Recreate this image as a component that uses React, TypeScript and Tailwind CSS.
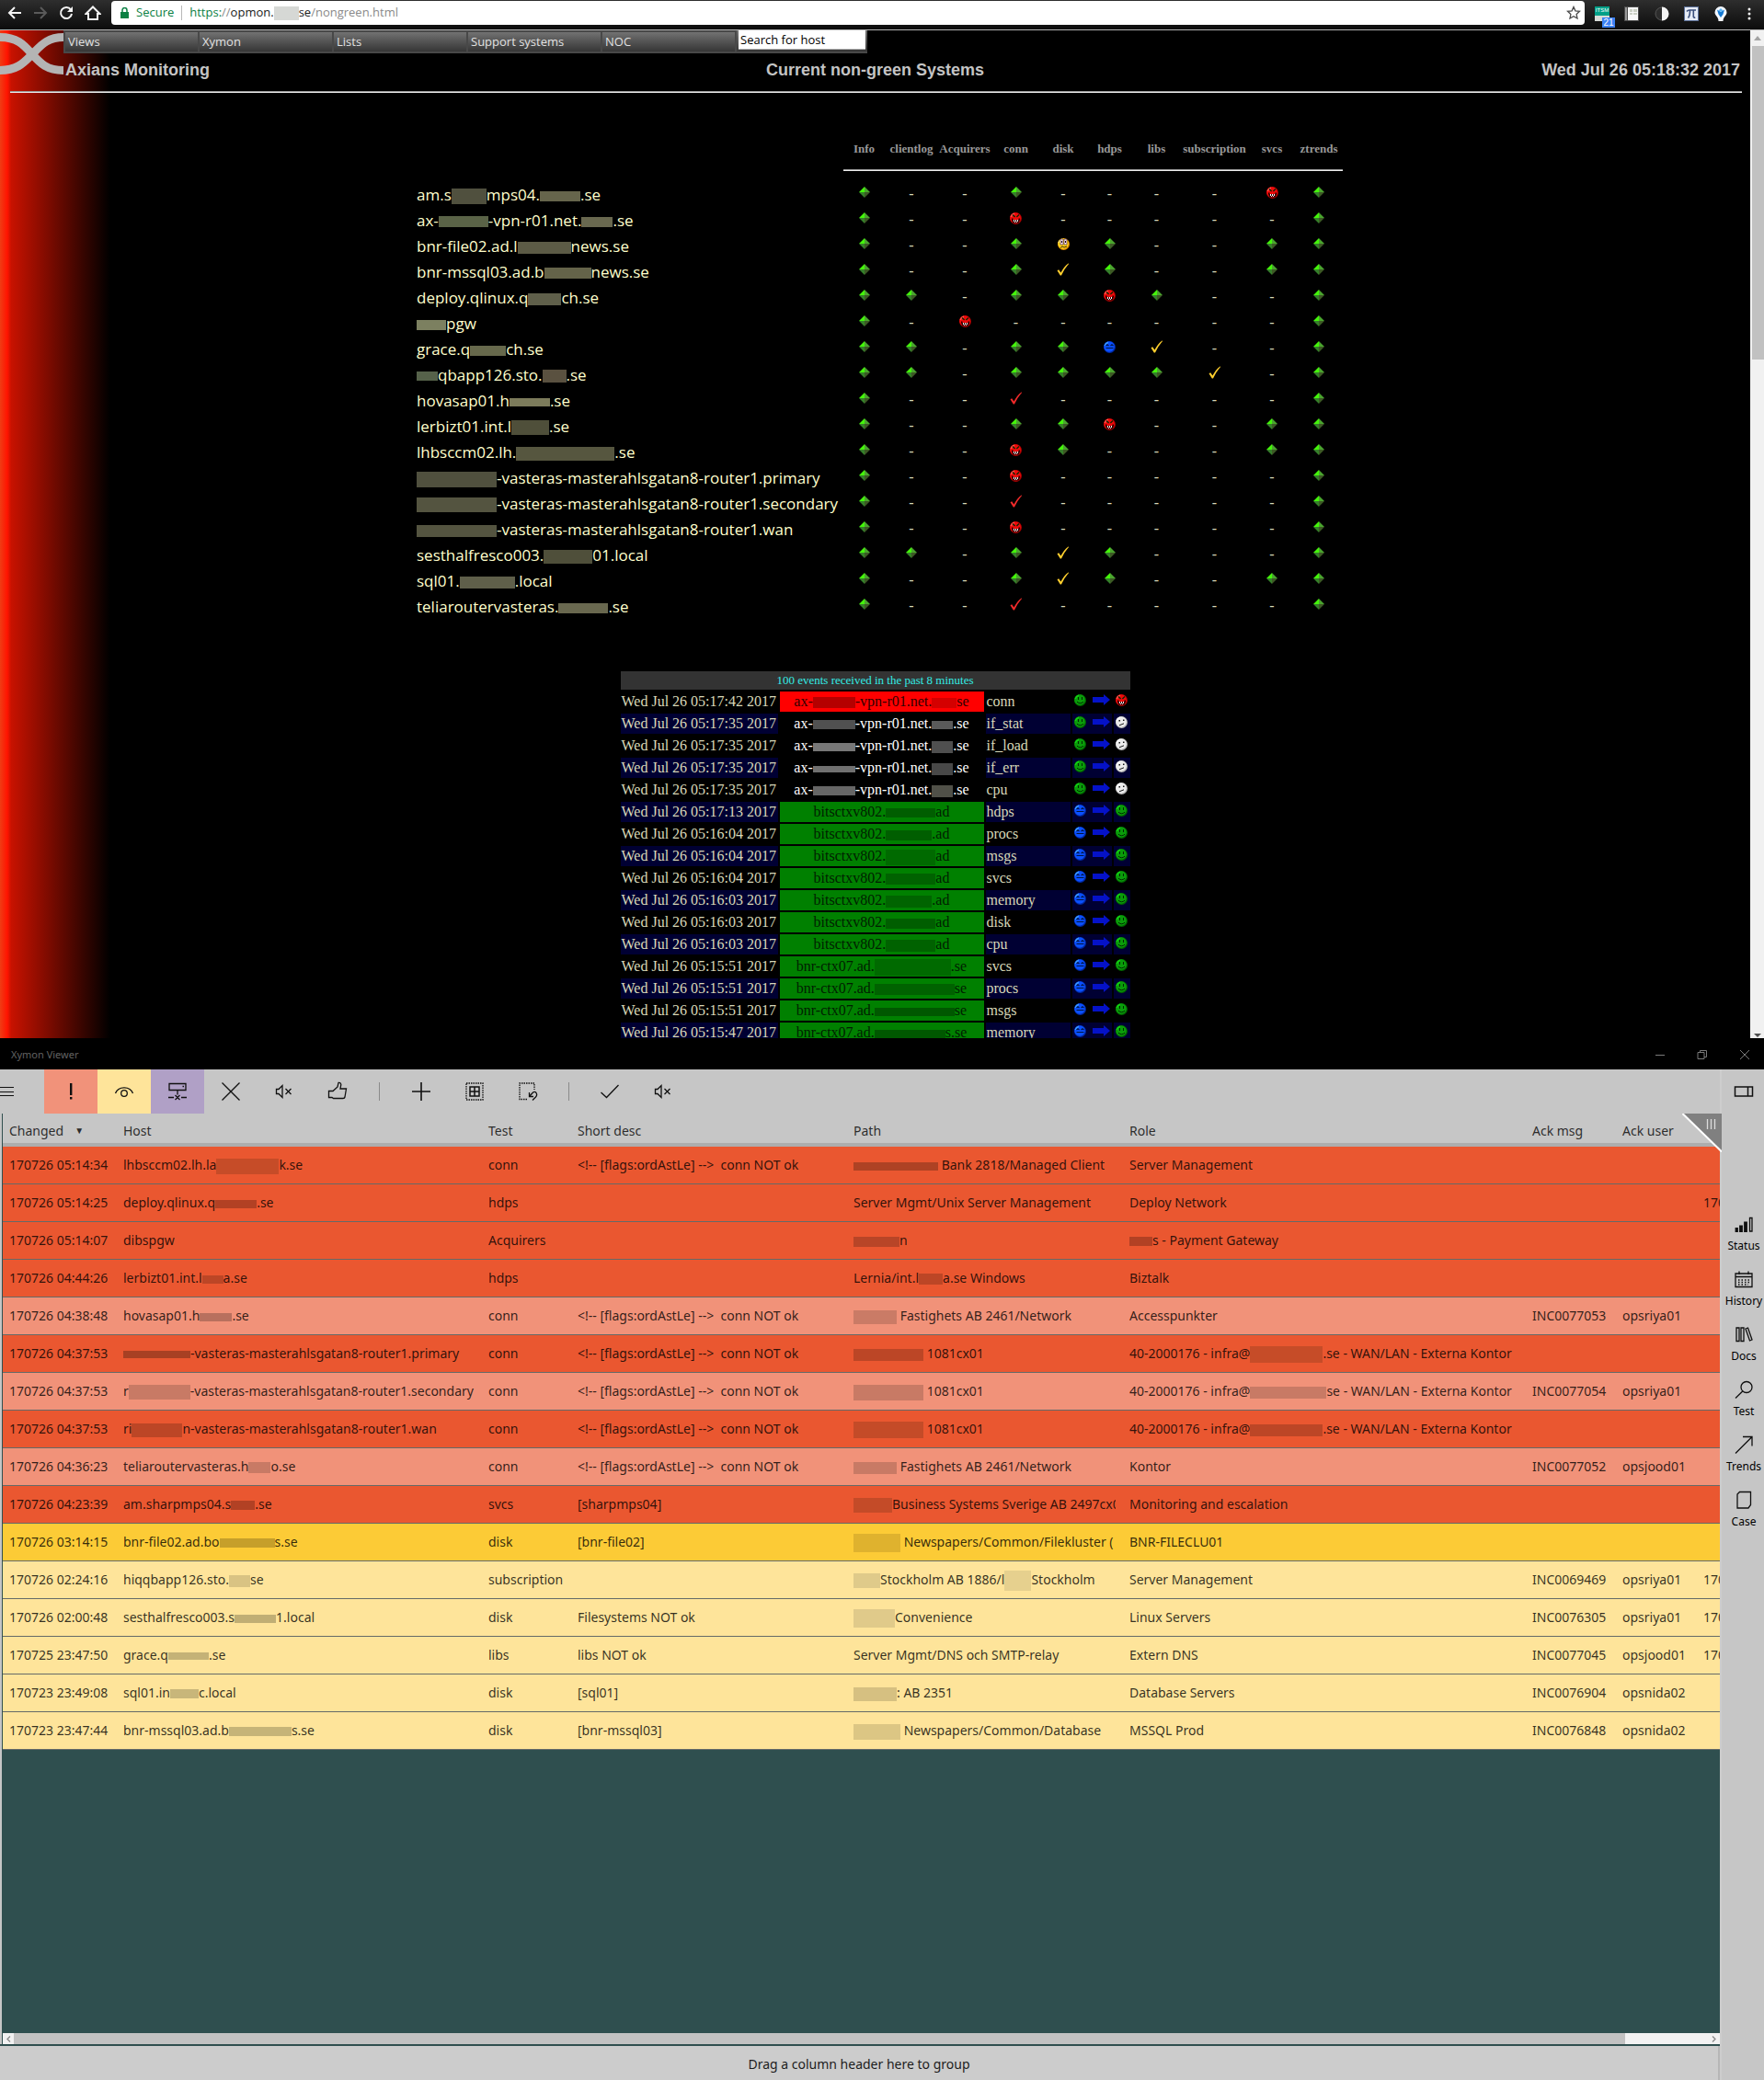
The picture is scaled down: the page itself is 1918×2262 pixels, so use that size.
import type { ReactNode } from "react";

/* Text with blocked-out parts: "{width,height,colour}" draws a solid bar in the line. */
function Masked({ text }: { text: string }) {
  return (
    <span className="whitespace-pre">
      {text.split(/(\{[^}]*\})/).map((part, i) => {
        if (!part.startsWith("{")) return part;
        const [w, h, c] = part.slice(1, -1).split(",");
        return (
          <span
            key={i}
            className="inline-block align-middle"
            style={{ width: Number(w), height: Number(h), backgroundColor: c }}
          />
        );
      })}
    </span>
  );
}

/* ---------- status icons ---------- */

function Diamond() {
  return (
    <svg width="12" height="12" viewBox="0 0 12 12" className="block">
      <path d="M6 0V6H0Z" fill="#44f50a" />
      <path d="M6 0V6H12Z" fill="#4aa52e" />
      <path d="M0 6H6V12Z" fill="#35812a" />
      <path d="M12 6H6V12Z" fill="#3c5a24" />
    </svg>
  );
}

function Face({ kind }: { kind: "red" | "yellow" | "blue" | "green" | "clear" }) {
  const base = { red: "#f00a0a", yellow: "#ffd21e", blue: "#0a50ff", green: "#0a9c0a", clear: "#ececec" }[kind];
  const light = { red: "#ff5a50", yellow: "#fff08c", blue: "#3c9cff", green: "#14d214", clear: "#ffffff" }[kind];
  const dark = { red: "#a80000", yellow: "#e08c00", blue: "#0028a0", green: "#006400", clear: "#b4b4b4" }[kind];
  return (
    <svg width="13" height="13" viewBox="0 0 13 13" className="block">
      <circle cx="6.5" cy="6.5" r="6.5" fill={dark} />
      <circle cx="6" cy="6" r="5.8" fill={base} />
      <path d="M1.2 5A5.4 5.4 0 0 1 5 1.2" fill="none" stroke={light} strokeWidth="1.4" />
      {kind === "red" && (
        <>
          <path d="M3 2.5L5.6 5M10 2.5L7.400 5" stroke="#052805" strokeWidth="1.3" />
          <path d="M2 6.5H3.500V8H9.500V6.500H11V8L9.500 11.500H3.500L2 8Z" fill="#280000" />
          <path d="M4 8h1v2H4zM6 8h1v2H6zM8 8h1v2H8z" fill="#ffffff" />
          <path d="M5 10h1v1H5zM7 10h1v1H7z" fill="#ffd0d8" />
        </>
      )}
      {kind === "yellow" && (
        <>
          <path d="M3 1h3v6H3zM7 1h3v6H7z" fill="#ffe6f5" stroke="#3c1e28" strokeWidth="0.6" />
          <path d="M4 3h1v2H4zM8 3h1v2H8z" fill="#1e0a14" />
          <path d="M3 10.5l2-1.5 2 1 3-1" fill="none" stroke="#3c2800" />
        </>
      )}
      {kind === "blue" && (
        <path d="M2.5 5L4 3.8 5.5 5M7.5 5L9 3.8 10.5 5M2.5 7.5h8" fill="none" stroke="#001440" strokeWidth="1.1" />
      )}
      {kind === "green" && (
        <>
          <path d="M4 3h1v3H4zM8 3h1v3H8z" fill="#002800" />
          <path d="M3 8.2Q6.5 11.4 10 8.2" fill="none" stroke="#002800" />
        </>
      )}
      {kind === "clear" && (
        <>
          <path d="M3.5 4h1.5v1.5H3.5zM8 3.5h1.5v1.5H8z" fill="#141414" />
          <path d="M4 9.8L6 9 9 7.8" fill="none" stroke="#141414" />
        </>
      )}
    </svg>
  );
}

function Check({ color }: { color: string }) {
  return (
    <svg width="14" height="14" viewBox="0 0 14 14" className="block">
      <path d="M0.5 8.2L2.2 7.2 4.4 10.6Q8 3.6 12.6 0.4L13.2 0.8Q8.6 6 5 13.4H3.8Z" fill={color} />
    </svg>
  );
}

function Arrow() {
  return (
    <svg width="19" height="12" viewBox="0 0 19 12" className="block">
      <path d="M0 3H12V0L19 6 12 12V9H0Z" fill="#0512c8" />
    </svg>
  );
}

function Status({ code }: { code: string }) {
  if (code === "g") return <Diamond />;
  if (code === "r") return <Face kind="red" />;
  if (code === "y") return <Face kind="yellow" />;
  if (code === "b") return <Face kind="blue" />;
  if (code === "k") return <Check color="#ffcf2e" />;
  return <Check color="#f02a2a" />;
}

/* ---------- data ---------- */

const tests = ["Info", "clientlog", "Acquirers", "conn", "disk", "hdps", "libs", "subscription", "svcs", "ztrends"];
const testWidths = [474, 45, 58, 58, 53, 50, 51, 51, 75, 50, 52];

const hosts: [string, string][] = [
  ["am.s{38,17,#50503e}mps04.{44,11,#66654c}.se", "g--g----rg"],
  ["ax-{54,12,#5a6347}-vpn-r01.net.{34,11,#69684f}.se", "g--r-----g"],
  ["bnr-file02.ad.l{58,13,#5c5b46}news.se", "g--gyg--gg"],
  ["bnr-mssql03.ad.b{51,12,#646349}news.se", "g--gkg--gg"],
  ["deploy.qlinux.q{36,13,#5f5f4a}ch.se", "gg-ggrg--g"],
  ["{32,11,#7c8060}pgw", "g-r------g"],
  ["grace.q{39,11,#67694c}ch.se", "gg-ggbk--g"],
  ["{23,10,#56624a}qbapp126.sto.{26,14,#5a5140}.se", "gg-ggggk-g"],
  ["hovasap01.h{44,9,#7c7b5b}.se", "g--c-----g"],
  ["lerbizt01.int.l{41,16,#4f4f3a}.se", "g--ggr--gg"],
  ["lhbsccm02.lh.{107,15,#56563f}.se", "g--rg---gg"],
  ["{87,17,#50503e}-vasteras-masterahlsgatan8-router1.primary", "g--r-----g"],
  ["{87,16,#545440}-vasteras-masterahlsgatan8-router1.secondary", "g--c-----g"],
  ["{87,13,#545440}-vasteras-masterahlsgatan8-router1.wan", "g--r-----g"],
  ["sesthalfresco003.{53,15,#4f4f3a}01.local", "gg-gkg---g"],
  ["sql01.{60,13,#5f5f4a}.local", "g--gkg--gg"],
  ["teliaroutervasteras.{54,11,#69684f}.se", "g--c-----g"],
];

const events: [string, string, string, "red" | "clear" | "green"][] = [
  ["05:17:42", "ax-{46,12,#b50000}-vpn-r01.net.{27,11,#d40000}se", "conn", "red"],
  ["05:17:35", "ax-{46,10,#505050}-vpn-r01.net.{23,9,#5a5a5a}.se", "if_stat", "clear"],
  ["05:17:35", "ax-{46,9,#777777}-vpn-r01.net.{23,13,#4f4f4f}.se", "if_load", "clear"],
  ["05:17:35", "ax-{46,7,#707070}-vpn-r01.net.{23,13,#484848}.se", "if_err", "clear"],
  ["05:17:35", "ax-{46,10,#666666}-vpn-r01.net.{23,13,#505048}.se", "cpu", "clear"],
  ["05:17:13", "bitsctxv802.{54,10,#005e00}ad", "hdps", "green"],
  ["05:16:04", "bitsctxv802.{50,11,#005e00}.ad", "procs", "green"],
  ["05:16:04", "bitsctxv802.{54,17,#006a00}ad", "msgs", "green"],
  ["05:16:04", "bitsctxv802.{54,12,#006200}ad", "svcs", "green"],
  ["05:16:03", "bitsctxv802.{50,13,#006400}.ad", "memory", "green"],
  ["05:16:03", "bitsctxv802.{54,11,#005e00}ad", "disk", "green"],
  ["05:16:03", "bitsctxv802.{54,13,#006200}ad", "cpu", "green"],
  ["05:15:51", "bnr-ctx07.ad.{83,18,#006a00}.se", "svcs", "green"],
  ["05:15:51", "bnr-ctx07.ad.{87,12,#006200}se", "procs", "green"],
  ["05:15:51", "bnr-ctx07.ad.{87,9,#005800}se", "msgs", "green"],
  ["05:15:47", "bnr-ctx07.ad.{77,9,#005800}s.se", "memory", "green"],
];

const conn = "<!-- [flags:ordAstLe] -->  conn NOT ok";
type Level = "red" | "pale" | "yellow" | "light";
/* level, changed, host, test, short desc, path, role, ack msg, ack user, ack time */
const alerts: [Level, string, string, string, string, string, string, string, string, string][] = [
  ["red", "170726 05:14:34", "lhbsccm02.lh.la{68,17,#c64c28}k.se", "conn", conn, "{92,9,#ae4224} Bank 2818/Managed Client", "Server Management", "", "", ""],
  ["red", "170726 05:14:25", "deploy.qlinux.q{45,9,#b24124}.se", "hdps", "", "Server Mgmt/Unix Server Management", "Deploy Network", "", "", "170726"],
  ["red", "170726 05:14:07", "dibspgw", "Acquirers", "", "{50,11,#b84527}n", "{25,10,#b24124}s - Payment Gateway", "", "", ""],
  ["red", "170726 04:44:26", "lerbizt01.int.l{23,9,#bc4626}a.se", "hdps", "", "Lernia/int.l{26,12,#bc4626}a.se Windows", "Biztalk", "", "", ""],
  ["pale", "170726 04:38:48", "hovasap01.h{35,9,#b8705e}.se", "conn", conn, "{47,15,#ca7b66} Fastighets AB 2461/Network", "Accesspunkter", "INC0077053", "opsriya01", ""],
  ["red", "170726 04:37:53", "{73,8,#a84023}-vasteras-masterahlsgatan8-router1.primary", "conn", conn, "{76,13,#bc4626} 1081cx01", "40-2000176 - infra@{79,18,#c64c28}.se - WAN/LAN - Externa Kontor", "", "", ""],
  ["pale", "170726 04:37:53", "r{67,16,#c87a65}-vasteras-masterahlsgatan8-router1.secondary", "conn", conn, "{76,17,#c87a65} 1081cx01", "40-2000176 - infra@{83,13,#c87a65}se - WAN/LAN - Externa Kontor", "INC0077054", "opsriya01", ""],
  ["red", "170726 04:37:53", "ri{55,15,#bc4626}n-vasteras-masterahlsgatan8-router1.wan", "conn", conn, "{76,18,#c44b28} 1081cx01", "40-2000176 - infra@{79,13,#bc4626}.se - WAN/LAN - Externa Kontor", "", "", ""],
  ["pale", "170726 04:36:23", "teliaroutervasteras.h{24,12,#c87a65}o.se", "conn", conn, "{47,13,#c87a65} Fastighets AB 2461/Network", "Kontor", "INC0077052", "opsjood01", ""],
  ["red", "170726 04:23:39", "am.sharpmps04.s{26,10,#b24124}.se", "svcs", "[sharpmps04]", "{42,16,#c44b28}Business Systems Sverige AB 2497cx01", "Monitoring and escalation", "", "", ""],
  ["yellow", "170726 03:14:15", "bnr-file02.ad.bo{60,10,#c69f2a}s.se", "disk", "[bnr-file02]", "{51,20,#dfb22e} Newspapers/Common/Filekluster (", "BNR-FILECLU01", "", "", ""],
  ["light", "170726 02:24:16", "hiqqbapp126.sto.{23,13,#d9c383}se", "subscription", "", "{29,16,#dfca8a}Stockholm AB 1886/l{29,22,#e6d08e}Stockholm", "Server Management", "INC0069469", "opsriya01", "170726"],
  ["light", "170726 02:00:48", "sesthalfresco003.s{45,9,#c0ae74}1.local", "disk", "Filesystems NOT ok", "{45,20,#e0ca8a}Convenience", "Linux Servers", "INC0076305", "opsriya01", "170726"],
  ["light", "170725 23:47:50", "grace.q{44,8,#c4b277}.se", "libs", "libs NOT ok", "Server Mgmt/DNS och SMTP-relay", "Extern DNS", "INC0077045", "opsjood01", "170726"],
  ["light", "170723 23:49:08", "sql01.in{31,10,#c8b67a}c.local", "disk", "[sql01]", "{47,15,#d6c081}: AB 2351", "Database Servers", "INC0076904", "opsnida02", ""],
  ["light", "170723 23:47:44", "bnr-mssql03.ad.b{68,10,#c6b478}s.se", "disk", "[bnr-mssql03]", "{51,17,#dcc684} Newspapers/Common/Database", "MSSQL Prod", "INC0076848", "opsnida02", ""],
];

const levelBg: Record<Level, string> = {
  red: "bg-[#ea5730]",
  pale: "bg-[#f19279]",
  yellow: "bg-[#fccb36]",
  light: "bg-[#fee49a]",
};

/* ---------- browser window ---------- */

function ChromeBar() {
  return (
    <div className="flex h-8 shrink-0 items-start bg-gradient-to-b from-[#2e2e2e] to-[#0c0c0c] pt-px">
      <div className="flex h-[26px] w-[121px] items-center gap-3 pl-2">
        <button aria-label="Back">
          <svg width="16" height="16" viewBox="0 0 16 16" fill="none" stroke="#f4f4f4" strokeWidth="2"><path d="M15 8H2M8 2L2 8l6 6" /></svg>
        </button>
        <button aria-label="Forward">
          <svg width="16" height="16" viewBox="0 0 16 16" fill="none" stroke="#5a5a5a" strokeWidth="2"><path d="M1 8h13M8 2l6 6-6 6" /></svg>
        </button>
        <button aria-label="Reload">
          <svg width="16" height="16" viewBox="0 0 16 16" fill="none" stroke="#f4f4f4" strokeWidth="2"><path d="M13 4.6A6 6 0 1 0 14 9" /><path d="M15 1v6H9z" fill="#f4f4f4" stroke="none" /></svg>
        </button>
        <button aria-label="Home">
          <svg width="18" height="16" viewBox="0 0 18 16" fill="none" stroke="#f4f4f4" strokeWidth="2"><path d="M1.5 9L9 1.5 16.500 9H14v6H4V9Z" /></svg>
        </button>
      </div>
      <div className="flex h-[26px] min-w-0 flex-1 items-center rounded-sm bg-white pl-2.5 pr-1 font-['Open_Sans',sans-serif] text-[13px]">
        <svg width="9" height="12" viewBox="0 0 9 12" className="mr-2"><path d="M0 5h9v7H0z" fill="#0b8043" /><path d="M2 5V3a2.500 2.500 0 0 1 5 0v2" fill="none" stroke="#0b8043" strokeWidth="1.500" /></svg>
        <span className="text-[#0b8043]">Secure</span>
        <span className="mx-2 h-4 w-px bg-[#b8b8b8]" />
        <span className="flex items-center whitespace-pre">
          <span className="text-[#0b8043]">https:</span>
          <span className="text-[#8a8a8a]">//</span>
          <span className="text-[#202020]">opmon.</span>
          <span className="h-[15px] w-[27px] bg-[#d6d8d5]" />
          <span className="text-[#202020]">se</span>
          <span className="text-[#8a8a8a]">/nongreen.html</span>
        </span>
        <button aria-label="Bookmark" className="ml-auto">
          <svg width="16" height="16" viewBox="0 0 16 16" fill="none" stroke="#4a4a4a" strokeWidth="1.300"><path d="M8 1.500l1.900 4.300 4.600.5-3.400 3.200.9 4.600L8 11.800l-4 2.300.9-4.600L1.500 6.300l4.600-.5z" /></svg>
        </button>
      </div>
      <div className="flex h-[27px] w-[195px] items-center justify-between pl-[11px] pr-2">
        <span className="relative block h-4 w-4 bg-[#d8dcd8]">
          <span className="block h-2.5 bg-[#00a088] text-center font-['Liberation_Sans',sans-serif] text-[6px] leading-[9px] text-white">ITSM</span>
          <span className="absolute left-2 top-3 h-[11px] w-[14px] bg-[#3c82f5] text-center font-['Liberation_Sans',sans-serif] text-[10px] leading-[11px] text-white">21</span>
        </span>
        <svg width="16" height="16" viewBox="0 0 16 16"><path d="M0 0h16v16H0z" fill="#4a4a4a" /><path d="M4 1h11v14H4z" fill="#f8f8f8" /><path d="M1 1h2v14H1z" fill="#9a9a9a" /><path d="M6 3h3v3H6zM10 3h4v3h-4zM6 7h3v2H6zM10 7h4v2h-4z" fill="#cbd0c4" /></svg>
        <svg width="16" height="16" viewBox="0 0 16 16"><circle cx="8" cy="8" r="7" fill="#2c2c2c" stroke="#555555" /><path d="M8 0.500a7.500 7.500 0 0 1 0 15z" fill="#f4f4f4" /></svg>
        <svg width="16" height="16" viewBox="0 0 16 16"><path d="M0 0h16v16H0z" fill="#5a6e96" /><path d="M1 1h14v14H1z" fill="#e6ecf6" /><path d="M3 5.500Q4 4 6 4h7M6.500 4.500Q6.500 10 4.500 12.500M10.300 4.500V11q.3 1.500 2 1" fill="none" stroke="#3c507d" strokeWidth="1.600" /></svg>
        <svg width="14" height="16" viewBox="0 0 14 16"><path d="M7 0a6.500 6.500 0 0 1 6.500 6.500C13.500 10 9.500 11 9.500 16h-5C4.500 11 .5 10 .5 6.500A6.500 6.500 0 0 1 7 0Z" fill="#f4f8ff" /><path d="M3 3.500l4 2.500 4-2.500-1.500 5L7 12 4.500 8.500Z" fill="#1478d2" /><path d="M7 2l2.500 2.500L7 6 4.500 4.500Z" fill="#5ab4f5" /></svg>
        <svg width="16" height="16" viewBox="0 0 16 16" fill="#f4f4f4"><circle cx="8" cy="3" r="1.500" /><circle cx="8" cy="8" r="1.500" /><circle cx="8" cy="13" r="1.500" /></svg>
      </div>
    </div>
  );
}

function StatusTable() {
  return (
    <table className="mx-auto mt-[43px] table-fixed border-collapse">
      <colgroup>
        {testWidths.map((w, i) => (
          <col key={i} style={{ width: w }} />
        ))}
      </colgroup>
      <thead>
        <tr className="h-9 font-['Liberation_Serif',serif] text-[13px] text-[#989898]">
          <td />
          {tests.map((t) => (
            <th key={t} className="p-0 text-center font-bold">{t}</th>
          ))}
        </tr>
        <tr className="h-[18px]">
          <td />
          <td colSpan={10} className="p-0 pt-1 align-top">
            <hr className="h-0.5 border-t border-[#9a9a9a] bg-[#ececec]" />
          </td>
        </tr>
      </thead>
      <tbody>
        {hosts.map(([host, codes], r) => (
          <tr key={r} className="h-7">
            <th scope="row" className="p-0 pl-2.5 text-left font-['Open_Sans',sans-serif] text-[17px] font-normal leading-7 text-[#ffffcc]">
              <a href="#host" className="block h-7"><Masked text={host} /></a>
            </th>
            {codes.split("").map((c, i) => (
              <td key={i} className="p-0 align-top">
                {c === "-" ? (
                  <span className="block text-center font-['Liberation_Serif',serif] text-base leading-[26px] text-[#d8d8b8]">-</span>
                ) : (
                  <span className="flex h-[22px] items-center justify-center"><Status code={c} /></span>
                )}
              </td>
            ))}
          </tr>
        ))}
      </tbody>
    </table>
  );
}

function EventTable() {
  return (
    <table className="mx-auto mt-[54px] w-[558px] table-fixed border-separate border-spacing-[2px] font-['Liberation_Serif',serif] text-base leading-[22px] text-[#d8d8b8]">
      <colgroup>
        <col className="w-[171px]" />
        <col className="w-[222px]" />
        <col className="w-[92px]" />
        <col className="w-[43px]" />
        <col className="w-[18px]" />
      </colgroup>
      <thead>
        <tr>
          <th colSpan={5} className="h-5 bg-[#333333] p-0 text-[13px] font-normal leading-5 text-[#33ebe4]">
            100 events received in the past 8 minutes
          </th>
        </tr>
      </thead>
      <tbody>
        {events.map(([time, host, test, to], i) => {
          const stripe = i % 2 ? "bg-[#000033]" : "bg-black";
          const hostCell =
            to === "red" ? "bg-[#ff0000] text-[#300000]" : to === "green" ? "bg-[#008000] text-[#001e00]" : "bg-black text-white";
          return (
            <tr key={i}>
              <td className={`h-[22px] whitespace-nowrap p-0 pl-px ${stripe}`}>Wed Jul 26 {time} 2017</td>
              <td className={`h-[22px] p-0 text-center ${hostCell}`}>
                <span className="block h-[22px]"><Masked text={host} /></span>
              </td>
              <td className={`h-[22px] p-0 pl-px ${stripe}`}>{test}</td>
              <td className={`h-[22px] p-0 align-top ${stripe}`}>
                <span className="flex h-[18px] items-center justify-between px-0.5">
                  <Face kind={to === "green" ? "blue" : "green"} />
                  <Arrow />
                </span>
              </td>
              <td className={`h-[22px] p-0 align-top ${stripe}`}>
                <span className="flex h-[18px] items-center justify-center"><Face kind={to} /></span>
              </td>
            </tr>
          );
        })}
      </tbody>
    </table>
  );
}

function Browser() {
  return (
    <section className="flex h-[calc(50vh-2px)] flex-col bg-black">
      <ChromeBar />
      <div className="flex min-h-0 flex-1 border-t border-[#b4b4b4]">
        <main className="relative min-w-0 flex-1 overflow-hidden">
          <div className="absolute inset-y-0 left-0 w-[120px] bg-[linear-gradient(90deg,#f03c14_0,#ff1400_8px,#c81200_12px,#000_120px)]" />
          <svg width="69" height="48" viewBox="0 0 69 48" className="absolute left-0 top-0.5" fill="none" stroke="#b4b4b4" strokeWidth="9">
            <path d="M0 5.500C19 5.500 26 14 35 24S51 41.500 69 41.500" />
            <path d="M0 41.500C19 41.500 26 33 35 24S51 5.500 69 5.500" />
          </svg>
          <nav className="relative ml-[69px] flex h-[25px] w-[874px] border-b-2 border-l-2 border-[#484848] bg-[#484848] font-['Open_Sans',sans-serif] text-[13px] text-[#e2e2e2]">
            {["Views", "Xymon", "Lists", "Support systems", "NOC"].map((m) => (
              <a key={m} href="#menu" className="w-[146px] border-r-2 border-t-2 border-[#484848] bg-gradient-to-b from-[#727272] to-[#363636] pl-[3px] leading-5">{m}</a>
            ))}
            <div className="flex-1 bg-gradient-to-b from-[#727272] to-[#363636] px-0.5">
              <input aria-label="Search for host" defaultValue="Search for host" className="block h-[21px] w-full border-b border-[#b4b4b4] bg-white px-0.5 text-[13px] leading-5 text-black" />
            </div>
          </nav>
          <header className="relative px-[9px]">
            <div className="grid h-[41px] grid-cols-[1fr_auto_1fr] pt-1 font-['Liberation_Sans',sans-serif] text-lg font-bold leading-7 text-[#c4c4c4]">
              <span className="pl-[62px]">Axians Monitoring</span>
              <h1>Current non-green Systems</h1>
              <span className="pr-0.5 text-right">Wed Jul 26 05:18:32 2017</span>
            </div>
            <hr className="ml-0.5 h-0.5 border-t border-[#9a9a9a] bg-[#ececec]" />
          </header>
          <StatusTable />
          <EventTable />
        </main>
        <div className="flex w-[15px] flex-col bg-[#f1f1f1]">
          <span className="flex h-[17px] items-center justify-center"><svg width="8" height="5" viewBox="0 0 8 5"><path d="M0 5L4 0 8 5Z" fill="#a3a3a3" /></svg></span>
          <span className="ml-0.5 h-[341px] bg-[#c1c1c1]" />
          <span className="mt-auto flex h-[5px] justify-center"><svg width="8" height="5" viewBox="0 0 8 5"><path d="M0 0L4 4 8 0Z" fill="#505050" /></svg></span>
        </div>
      </div>
    </section>
  );
}

/* ---------- viewer window ---------- */

function Line({ w = 22, h = 22, children }: { w?: number; h?: number; children: ReactNode }) {
  return (
    <svg width={w} height={h} viewBox={`0 0 ${w} ${h}`} fill="none" stroke="#101010" strokeWidth="1.3">
      {children}
    </svg>
  );
}

function Tool({ label, className = "", children }: { label: string; className?: string; children: ReactNode }) {
  return (
    <button aria-label={label} className={`flex h-12 w-[58px] shrink-0 items-center justify-center ${className}`}>
      {children}
    </button>
  );
}

const muted = (
  <Line w={20} h={18}>
    <path d="M1.500 6.500h2.500L8 2.500v13L4 11.500H1.500Z" />
    <path d="M11.500 6l6 6M17.500 6l-6 6" />
  </Line>
);

function Toolbar() {
  return (
    <div className="flex h-12 shrink-0 items-center">
      <button aria-label="Menu" className="h-12 w-12">
        <svg width="16" height="12" viewBox="0 0 16 12" stroke="#101010" strokeWidth="1"><path d="M0 1.500h15M0 6.500h15M0 10.500h15" /></svg>
      </button>
      <Tool label="Critical" className="bg-[#f1927a]"><svg width="6" height="20" viewBox="0 0 6 20"><path d="M2 1h2.400v13H2zM2 16h2.400v2.500H2z" fill="#101010" /></svg></Tool>
      <Tool label="Watch" className="bg-[#fee49a]"><Line><path d="M1.500 13A10 9 0 0 1 20.500 13" /><circle cx="11" cy="13" r="3.300" /></Line></Tool>
      <Tool label="Disconnected" className="bg-[#b0a0c6]"><Line><path d="M2 2.500h18v7H2zM11 9.500v5M1 17.500h6M15 17.500h6M8.500 15l5 5M13.500 15l-5 5M16.500 5.500h1.500" /></Line></Tool>
      <Tool label="Close"><Line><path d="M1.500 1.500l19 19M20.500 1.500l-19 19" /></Line></Tool>
      <Tool label="Mute">{muted}</Tool>
      <Tool label="Like"><Line><path d="M1.500 10.500H6L11 6l1-4.500q2.500-.5 2.800 2L14 8h6.500l-1.500 9q-.3 1.500-2 1.500H6.500L5 17.500H1.500Z" /></Line></Tool>
      <span className="ml-4 h-5 w-px bg-[#8a8a8a]" />
      <Tool label="Add" className="ml-4"><Line><path d="M11 1v20M1 11h20" strokeWidth="1.600" /></Line></Tool>
      <Tool label="Select all"><Line><path d="M2 2h18v18H2Z" strokeDasharray="1.500 1" /><path d="M6 6h10v10H6ZM11 6v10M6 11h10" strokeWidth="1.500" /></Line></Tool>
      <Tool label="Reset selection"><Line><path d="M10 19.500H2V2h16v7" strokeDasharray="1.500 1" /><path d="M12.500 12v4.500h4.500M12.500 16.500l4-4.500q2-1.500 3.500.5 1.500 2.500-.5 4.500L16 20.500" /></Line></Tool>
      <span className="ml-[15px] h-5 w-px bg-[#8a8a8a]" />
      <Tool label="Acknowledge" className="ml-[15px]"><Line><path d="M1.500 12L7.500 17.500 20.500 4" /></Line></Tool>
      <Tool label="Mute all">{muted}</Tool>
    </div>
  );
}

const panels: [string, ReactNode][] = [
  ["Status", <><path d="M1.500 15v3M1.500 15h1.500v3H1.500zM6 12.500h2V18H6zM11 8.500h2V18h-2z" fill="#101010" strokeWidth="1.800" /><path d="M16.500 3.500h2.500V18h-2.500z" /></>],
  ["History", <><path d="M1 4h18v14.500H1zM1 7.500h18M5 1.500V5M15 1.500V5" /><path d="M4 11h13M4 13.500h13M4 16h11" strokeDasharray="1.500 2" /></>],
  ["Docs", <path d="M2 3h3v14.500H2zM7 3h3v14.500H7zM12 4l2.500-1L19 16l-2.500 1z" />],
  ["Test", <><circle cx="13" cy="7.500" r="6" /><path d="M8.700 12L1 19.500" /></>],
  ["Trends", <path d="M1 19.500L19 1.500M9 1.500h10v10" />],
  ["Case", <path d="M5.500 1.500H17.500V15.500L15 19H3V4Z" />],
];

function Viewer() {
  const heads = ["Changed", "Host", "Test", "Short desc", "Path", "Role", "Ack msg", "Ack user", ""];
  return (
    <section className="flex min-h-0 flex-1 flex-col bg-[#c6c6c6] font-['Noto_Sans',sans-serif]">
      <div className="flex h-[34px] shrink-0 items-center bg-black pl-3 pt-0.5 text-[11px] text-[#626262]">
        <span>Xymon Viewer</span>
        <div className="ml-auto flex">
          {[
            ["Minimize", "M1 6.500h10"],
            ["Restore", "M1 3.500h7v7H1zM3.500 3.500v-2h7v7h-2.500"],
            ["Close window", "M1 1l10 10M11 1L1 11"],
          ].map(([l, d]) => (
            <button key={l} aria-label={l} className="flex w-[46px] items-center justify-center pl-1">
              <svg width="12" height="12" viewBox="0 0 12 12" fill="none" stroke="#7a7a7a"><path d={d} /></svg>
            </button>
          ))}
        </div>
      </div>
      <div className="flex min-h-0 flex-1">
        <div className="flex min-w-0 flex-1 flex-col">
          <Toolbar />
          <div className="relative ml-0.5 flex min-h-0 flex-1 flex-col border-l border-[#2f4f4f] bg-[#2f4f4f]">
            <div className="min-h-0 flex-1 overflow-hidden">
              <table className="w-full table-fixed border-collapse text-sm leading-5 text-[#000000cc]">
                <colgroup>
                  <col className="w-[124px]" />
                  <col className="w-[397px]" />
                  <col className="w-[97px]" />
                  <col className="w-[300px]" />
                  <col className="w-[300px]" />
                  <col />
                  <col className="w-[98px]" />
                  <col className="w-[88px]" />
                  <col className="w-[25px]" />
                </colgroup>
                <thead>
                  <tr className="bg-[#c6c6c6]">
                    {heads.map((h, i) => (
                      <th key={i} className="h-[34px] whitespace-nowrap border-b-4 border-[#adadad] p-0 pl-[7px] pt-1.5 text-left font-normal">
                        {h}
                        {i === 0 && <span className="ml-3 inline-block pb-1 align-middle text-[10px] leading-3">▼</span>}
                      </th>
                    ))}
                  </tr>
                </thead>
                <tbody>
                  {alerts.map(([level, ...cells], r) => (
                    <tr key={r} className={levelBg[level]}>
                      {cells.map((c, i) => (
                        <td key={i} className="h-[41px] border-b border-[#646a68] p-0">
                          <div className={`h-10 overflow-hidden whitespace-nowrap pl-[7px] leading-10 ${i === 4 ? "mr-2" : ""}`}>
                            <Masked text={c} />
                          </div>
                        </td>
                      ))}
                    </tr>
                  ))}
                </tbody>
              </table>
            </div>
            <div className="flex h-3 shrink-0 items-center bg-[#f2f2f2]">
              <span className="flex w-3 justify-center"><svg width="5" height="7" viewBox="0 0 5 7" fill="none" stroke="#8a8a8a" strokeWidth="1.300"><path d="M4 .5L1 3.500l3 3" /></svg></span>
              <span className="h-3 flex-1 bg-[#c2c2c2]" />
              <span className="flex w-[103px] justify-end pr-1"><svg width="5" height="7" viewBox="0 0 5 7" fill="none" stroke="#8a8a8a" strokeWidth="1.300"><path d="M1 .5l3 3-3 3" /></svg></span>
            </div>
            <svg width="43" height="42" viewBox="0 0 43 42" className="absolute -right-0.5 top-0">
              <path d="M1 0H43V41Z" fill="#808080" />
              <path d="M0.500 0L43 41.500" stroke="#ffffff" strokeWidth="2" />
              <path d="M27.500 6v11M31.500 6v11M35.500 6v11" stroke="#dcdcdc" strokeWidth="1.300" />
            </svg>
          </div>
          <div className="mt-0.5 flex h-[37px] shrink-0 items-center justify-center border-r-2 border-[#b6b6b6] bg-[#cccccc] pt-0.5 text-sm text-[#1c1c1c] shadow-[0_-2px_0_#2f4f4f]">
            Drag a column header here to group
          </div>
        </div>
        <aside className="flex w-12 shrink-0 flex-col border-l-2 border-[#cdcdcd] pl-0.5">
          <button aria-label="Toggle panel" className="flex h-12 shrink-0 items-center justify-center">
            <svg width="22" height="12" viewBox="0 0 22 12" fill="none" stroke="#101010" strokeWidth="1.500"><path d="M1.500 1h19v10h-19zM15.500 1v10" /></svg>
          </button>
          <nav className="mt-[105px] flex flex-col">
            {panels.map(([label, icon]) => (
              <button key={label} className="flex h-[60px] flex-col items-center pt-[5px] text-xs leading-4 text-black">
                <Line w={20} h={21}>{icon}</Line>
                <span className="mt-[5px]">{label}</span>
              </button>
            ))}
          </nav>
        </aside>
      </div>
    </section>
  );
}

export default function App() {
  return (
    <div className="flex h-screen flex-col overflow-hidden bg-black">
      <Browser />
      <Viewer />
    </div>
  );
}
